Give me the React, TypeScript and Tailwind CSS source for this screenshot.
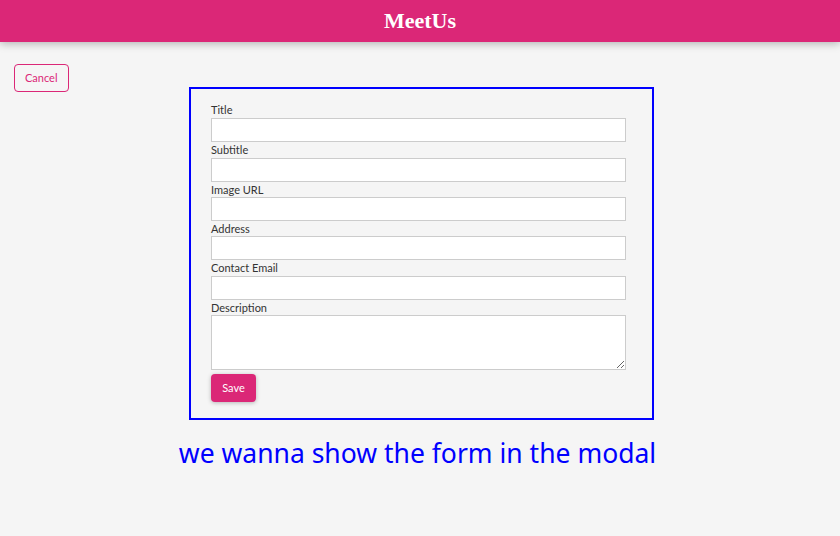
import React from "react";

const fields: [string, string][] = [
  ["Title", "leading-[16px]"],
  ["Subtitle", "leading-[16px]"],
  ["Image URL", "leading-[15px]"],
  ["Address", "leading-[15px]"],
  ["Contact Email", "leading-[16px]"],
];

export default function App() {
  return (
    <div className="min-h-[536px] bg-[#f5f5f5] font-['Lato',sans-serif]">
      <header className="h-[42px] bg-[#db2777] shadow-[0_2px_8px_rgba(0,0,0,0.26)] flex items-center justify-center">
        <h1 className="text-white text-[22px] font-bold font-['Liberation_Serif',serif] leading-none">MeetUs</h1>
      </header>
      <div className="grid grid-cols-[189px_465px_1fr]">
        <div>
          <button className="ml-[14px] mt-[22px] h-[28px] px-[10px] border border-[#db2777] rounded-[4px] text-[#db2777] text-[11px] bg-transparent">
            Cancel
          </button>
        </div>
        <div className="mt-[45px] border-2 border-[#0000ff] pt-[13px] pb-[16px] pl-[20px] pr-[26px]">
          {fields.map(([f, lh]) => (
            <div key={f} className="flex flex-col">
              <label className={`text-[11px] text-[#333] ${lh}`}>{f}</label>
              <input className="h-[24px] bg-white border border-[#ccc] outline-none" />
            </div>
          ))}
          <div className="flex flex-col">
            <label className="text-[11px] leading-[15px] text-[#333]">Description</label>
            <textarea className="h-[55px] bg-white border border-[#ccc] outline-none block" />
          </div>
          <button className="mt-[4px] h-[28px] w-[45px] bg-[#db2777] text-white text-[11px] rounded-[4px] shadow-[0_1px_4px_rgba(0,0,0,0.26)]">
            Save
          </button>
        </div>
        <div />
      </div>
      <p className="mt-[13px] pr-[5px] text-center text-[#0000ff] text-[26.5px] leading-[40px] font-['Noto_Sans',sans-serif]">
        we wanna show the form in the modal
      </p>
    </div>
  );
}
